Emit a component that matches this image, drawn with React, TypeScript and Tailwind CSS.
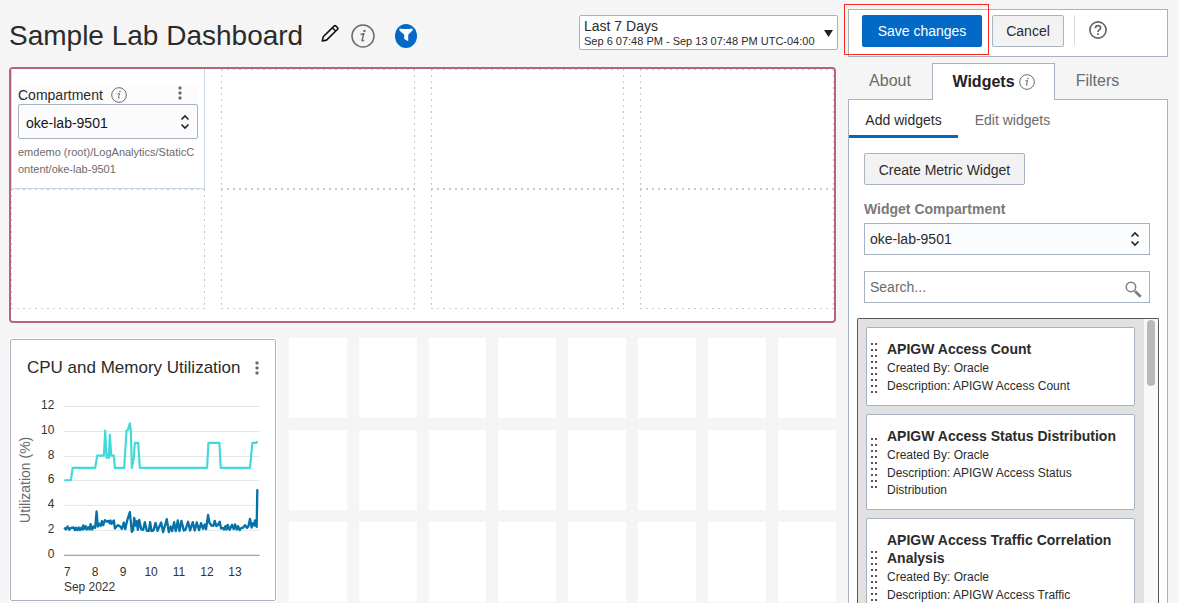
import React from "react";
import type { ReactNode } from "react";

const days = [7, 8, 9, 10, 11, 12, 13];
const ticks = [12, 10, 8, 6, 4, 2, 0];

const widgets = [
  { title: "APIGW Access Count", description: "APIGW Access Count" },
  { title: "APIGW Access Status Distribution", description: "APIGW Access Status Distribution" },
  { title: "APIGW Access Traffic Correlation Analysis", description: "APIGW Access Traffic Correlation Analysis" },
];

const memoryPoints =
  "193,451 213,451 218,414 286,414 292,377 312,377 316,302 320,384 323,372 327,384 330,315 334,377 342,377 345,414 373,414 380,302 384,300 390,280 393,302 396,414 402,384 405,339 415,339 420,414 622,414 626,339 659,339 663,414 751,414 758,339 770,339 773,334";

const cpuPoints =
  "193,593 198,599 203,590 208,600 213,594 221,593 225,601 228,594 232,601 236,593 240,601 244,594 248,599 250,587 254,597 257,589 261,599 265,592 269,599 272,583 277,599 281,590 286,594 290,545 294,590 299,582 303,588 306,574 310,586 315,571 320,575 326,573 329,580 332,572 335,582 339,576 342,572 345,596 350,590 355,586 360,589 366,597 372,578 376,598 382,572 390,547 396,606 400,600 403,564 408,588 411,574 414,600 418,570 424,598 430,600 435,577 441,603 447,603 451,577 455,604 461,602 467,579 473,603 484,578 490,607 501,568 507,607 513,590 517,604 523,577 528,604 534,572 539,604 545,573 552,602 557,600 565,576 571,602 579,577 585,602 591,578 598,601 604,580 610,597 615,584 619,598 625,555 629,578 635,587 641,588 645,573 650,589 654,586 660,576 664,596 669,594 673,599 677,589 681,599 684,585 690,600 697,585 702,598 706,584 711,599 715,589 720,601 725,594 730,594 736,586 742,594 746,590 751,567 756,593 760,580 764,587 766,572 771,591 773,478";

function InfoIcon({ className }: { className: string }) {
  return (
    <svg viewBox="0 0 24 24" className={className} fill="none" stroke="#6b6b6b" aria-hidden="true">
      <circle cx="12" cy="12" r="11" strokeWidth="1.5" />
      <path d="M9.6 10.4l3.2-.6-1.7 6.3c-.2.9.6 1 2 .1" strokeWidth="1.5" />
      <circle cx="13.4" cy="6.9" r="1.2" fill="#6b6b6b" stroke="none" />
    </svg>
  );
}

function UpDownIcon({ className }: { className: string }) {
  return (
    <svg viewBox="0 0 10 16" className={`pointer-events-none absolute h-4 w-2.5 ${className}`} fill="none" stroke="#222" strokeWidth="1.6" aria-hidden="true">
      <path d="M1.500 5.500l3.500-3.500 3.500 3.500M1.500 10.500l3.500 3.500 3.500-3.500" />
    </svg>
  );
}

function MoreButton({ label }: { label: string }) {
  return (
    <button type="button" aria-label={label} className="flex h-4 w-4 items-center justify-center">
      <svg viewBox="0 0 4 14" className="h-3.5 w-1" fill="#666" aria-hidden="true">
        <rect x="0.500" y="0.500" width="3" height="3" rx="1" />
        <rect x="0.500" y="5.500" width="3" height="3" rx="1" />
        <rect x="0.500" y="10.500" width="3" height="3" rx="1" />
      </svg>
    </button>
  );
}

function FilterCell({ children }: { children?: ReactNode }) {
  return (
    <div className="bg-[image:repeating-linear-gradient(90deg,#c9c9c9_0_2px,transparent_2px_6px),repeating-linear-gradient(90deg,#c9c9c9_0_2px,transparent_2px_6px),repeating-linear-gradient(180deg,#c9c9c9_0_2px,transparent_2px_6px),repeating-linear-gradient(180deg,#c9c9c9_0_2px,transparent_2px_6px)] bg-[length:100%_1px,100%_1px,1px_100%,1px_100%] bg-[position:0_0,0_100%,0_0,100%_0] bg-no-repeat">
      {children}
    </div>
  );
}

function CompartmentFilter() {
  return (
    <div className="h-full border border-t-0 border-[#c9d6e1] bg-white px-1.5 pt-4">
      <div className="flex h-[19px] items-center bg-[#fcfcfc]">
        <label htmlFor="compartment" className="text-sm leading-5">Compartment</label>
        <InfoIcon className="ml-2 h-4 w-4" />
        <div className="-mt-1 mr-2.5 ml-auto flex">
          <MoreButton label="Compartment actions" />
        </div>
      </div>
      <div className="relative flex items-center">
        <select id="compartment" className="h-[35px] w-full appearance-none rounded-xs border border-[#a7b3bf] bg-[#fbfbfc] px-[7px] pt-0.5 text-sm text-[#161513]">
          <option>oke-lab-9501</option>
        </select>
        <UpDownIcon className="right-2" />
      </div>
      <p className="mt-[5px] text-[11px] leading-[17px] break-all text-[#6b6b6b]">
        emdemo (root)/LogAnalytics/StaticContent/oke-lab-9501
      </p>
    </div>
  );
}

function UtilizationChart() {
  return (
    <svg viewBox="11 392 264 208" className="mt-3 w-full" fontSize="12" fill="#333" role="img" aria-label="CPU and Memory Utilization">
      {ticks.map((t) => (
        <g key={t}>
          <path d={`M64 ${Math.round(555 - t * 12.43) + 0.5}H260`} stroke={t === 0 ? "#8c8c8c" : "#dfe5ea"} />
          <text x="54.5" y={558 - t * 12.4} textAnchor="end">{t}</text>
        </g>
      ))}
      {days.map((d, i) => (
        <text key={d} x={67.3 + i * 28} y="576" textAnchor="middle">{d}</text>
      ))}
      <text x="64" y="591">Sep 2022</text>
      <text transform="translate(30 480) rotate(-90)" textAnchor="middle" fontSize="14" fill="#6b6b6b">Utilization (%)</text>
      <g transform="translate(0 330) scale(0.33333)" fill="none" strokeLinejoin="round">
        <polyline points={memoryPoints} stroke="#44d8d9" strokeWidth="6.5" />
        <polyline points={cpuPoints} stroke="#0572a8" strokeWidth="7" />
      </g>
    </svg>
  );
}

function DragHandle() {
  return (
    <svg viewBox="0 0 7 50" className="h-[50px] w-[7px] shrink-0" fill="#555" aria-hidden="true">
      {[0, 6, 12, 18, 24, 30, 36, 42, 48].map((y) => (
        <g key={y}>
          <rect x="0" y={y} width="2" height="2" />
          <rect x="4" y={y} width="2" height="2" />
        </g>
      ))}
    </svg>
  );
}

function Dashboard() {
  return (
    <main className="flex min-w-0 flex-1 flex-col">
      <header className="flex h-[67px] shrink-0 items-start">
        <h1 className="mt-4 text-[28px] leading-10">Sample Lab Dashboard</h1>
        <button type="button" aria-label="Edit name" className="mt-6 ml-[18px]">
          <svg viewBox="0 0 18 18" className="size-[18px]" fill="none" stroke="#111" strokeWidth="1.6" strokeLinejoin="round" aria-hidden="true">
            <path d="M1.300 17l.900-4.200L13.300 1.900q.700-.700 1.400 0l1.900 1.900q.600.700 0 1.400L5.500 16.100z" />
            <path d="M11.500 3.900l3.200 3.200" strokeWidth="1.400" />
          </svg>
        </button>
        <button type="button" aria-label="Information" className="mt-6 ml-3">
          <InfoIcon className="size-6" />
        </button>
        <button type="button" aria-label="Filters" className="mt-6 ml-5">
          <svg viewBox="0 0 22 24" className="h-6 w-[22px]" aria-hidden="true">
            <ellipse cx="11" cy="12" rx="11" ry="12" fill="#0369c6" />
            <path d="M4.500 4.500q6.500 1 13 0v2l-4.300 4.300v6.400l-4-2.200v-4.200L4.500 6.500z" fill="#fff" />
          </svg>
        </button>
        <button type="button" className="relative mt-[15px] -mr-0.5 ml-auto h-[35px] w-[259px] rounded-xs border border-[#a7b3bf] bg-white pl-1 text-left">
          <span className="block text-sm leading-4">Last 7 Days</span>
          <span className="block text-[11px] leading-[14px]">Sep 6 07:48 PM - Sep 13 07:48 PM UTC-04:00</span>
          <svg viewBox="0 0 9 7" className="absolute top-3.5 right-1 h-[7px] w-[9px]" fill="#222" aria-hidden="true">
            <path d="M0 0h9L4.5 7z" />
          </svg>
        </button>
      </header>

      <section aria-label="Filters" className="grid shrink-0 auto-rows-[120px] grid-cols-4 gap-x-4 rounded border-2 border-[#b46675] bg-white pb-3">
        <FilterCell><CompartmentFilter /></FilterCell>
        {Array.from({ length: 7 }, (_, i) => <FilterCell key={i} />)}
      </section>

      <section aria-label="Canvas" className="mt-[15px] grid auto-rows-[80px] grid-cols-12 gap-3">
        <div className="col-span-4 row-span-3 bg-white p-px">
          <article className="h-full rounded-xs border border-[#a7b3bf] bg-white">
            <div className="flex items-center pt-4 pr-2.5 pl-4">
              <h2 className="flex-1 text-[17px] leading-6 whitespace-nowrap">CPU and Memory Utilization</h2>
              <MoreButton label="Widget actions" />
            </div>
            <UtilizationChart />
          </article>
        </div>
        {Array.from({ length: 24 }, (_, i) => <div key={i} className="bg-white" />)}
      </section>
    </main>
  );
}

function SidePanel() {
  return (
    <aside className="flex w-80 shrink-0 flex-col pt-[9px]">
      <div className="flex h-12 shrink-0 items-start border border-[#a7b3bf] bg-white pt-[5px] pl-[13px]">
        <div className="relative">
          <button type="button" className="h-8 w-[120px] rounded-xs bg-[#0369c6] text-sm text-white">Save changes</button>
          <div className="pointer-events-none absolute -top-[11px] -right-[7px] -bottom-2 -left-[18px] border border-[#fb2a1c]" />
        </div>
        <button type="button" className="ml-2.5 h-8 w-[72px] rounded-xs border border-[#a7b3bf] bg-[#f2f2f2] text-sm">Cancel</button>
        <div className="ml-2.5 h-[30px] w-px bg-[#d5dadf]" />
        <button type="button" aria-label="Help" className="mt-1.5 ml-3.5">
          <svg viewBox="0 0 18 18" className="size-[18px]" fill="none" stroke="#666" strokeWidth="1.7" aria-hidden="true">
            <circle cx="9" cy="9" r="8.1" />
            <path d="M6.4 7.2c0-3.6 5.4-3.4 5.2-.3C11.5 8.7 9 8.7 9 11" />
            <path d="M9 12.2v1.9" />
          </svg>
        </button>
      </div>

      <nav aria-label="Panel" className="relative z-10 mt-1.5 -mb-px flex h-[37px] shrink-0 text-base text-[#6b6b6b]">
        <button type="button" className="w-[84px] pb-0.5">About</button>
        <button type="button" className="flex w-[123px] items-center justify-center gap-1 border border-b-0 border-[#a7b3bf] bg-white font-bold text-[#222]">
          Widgets <InfoIcon className="h-4 w-4" />
        </button>
        <button type="button" className="w-[85px] pb-0.5">Filters</button>
      </nav>

      <div className="flex min-h-0 flex-1 flex-col border border-b-0 border-[#a7b3bf] bg-white">
        <nav aria-label="Widgets" className="flex h-[38px] shrink-0 items-stretch text-sm">
          <button type="button" className="w-[109px] border-b-3 border-[#0369c6] pt-1">Add widgets</button>
          <button type="button" className="w-[109px] border-b-3 border-transparent pt-1 text-[#6b6b6b]">Edit widgets</button>
        </nav>
        <div className="flex shrink-0 flex-col px-[15px] pt-[15px]">
          <button type="button" className="h-8 w-[161px] rounded-xs border border-[#a7b3bf] bg-[#f2f2f2] pt-0.5 text-sm whitespace-nowrap">Create Metric Widget</button>
          <label htmlFor="widget-compartment" className="mt-3.5 mb-1 text-sm leading-5 font-bold text-[#7a7a7a]">Widget Compartment</label>
          <div className="relative mr-0.5 flex items-center">
            <select id="widget-compartment" className="h-8 w-full appearance-none border border-[#a7b3bf] bg-[#fbfcfd] px-[5px] text-sm">
              <option>oke-lab-9501</option>
            </select>
            <UpDownIcon className="right-2.5" />
          </div>
          <div className="relative mt-4 mr-0.5 flex items-center">
            <input type="search" aria-label="Search widgets" placeholder="Search..." className="h-8 w-full border border-[#a7b3bf] bg-white px-[5px] text-sm placeholder:text-[#6b6b6b]" />
            <svg viewBox="0 0 18 18" className="absolute top-2.5 right-2 size-[17px]" fill="none" stroke="#7b7f83" aria-hidden="true">
              <circle cx="6.3" cy="6.3" r="5" strokeWidth="1.6" />
              <path d="M9.8 10l2 2" strokeWidth="1.5" />
              <path d="M11 11l5.6 5.6" strokeWidth="3" />
            </svg>
          </div>
        </div>

        <div className="mx-2 mt-[15px] flex min-h-0 flex-1 overflow-hidden rounded-t-xs border border-b-0 border-[#55585b] bg-[#e1e1e1]">
          <ul className="flex min-w-0 flex-1 flex-col gap-2 py-2 pr-[9px] pl-2">
            {widgets.map((w) => (
              <li key={w.title} className="flex shrink-0 items-center gap-[9px] rounded-xs border border-[#a7b3bf] bg-white pt-3 pr-3 pb-2.5 pl-1">
                <DragHandle />
                <div className="min-w-0">
                  <h3 className="text-sm leading-[18px] font-bold">{w.title}</h3>
                  <p className="mt-0.5 text-xs leading-[17px]">Created By: Oracle</p>
                  <p className="mt-px text-xs leading-[17px]">{`Description: ${w.description}`}</p>
                </div>
              </li>
            ))}
          </ul>
          <div className="w-3.5 shrink-0 bg-[#f8f8f8] pt-px pl-[3px]">
            <div className="h-[66px] w-2 rounded-full bg-[#b9b9b9]" />
          </div>
        </div>
      </div>
    </aside>
  );
}

export default function App() {
  return (
    <div className="flex h-screen gap-3 overflow-hidden bg-[#f5f5f5] pr-[11px] pl-[9px] font-['Liberation_Sans',Arial,sans-serif] text-[#2b2b2b]">
      <Dashboard />
      <SidePanel />
    </div>
  );
}
